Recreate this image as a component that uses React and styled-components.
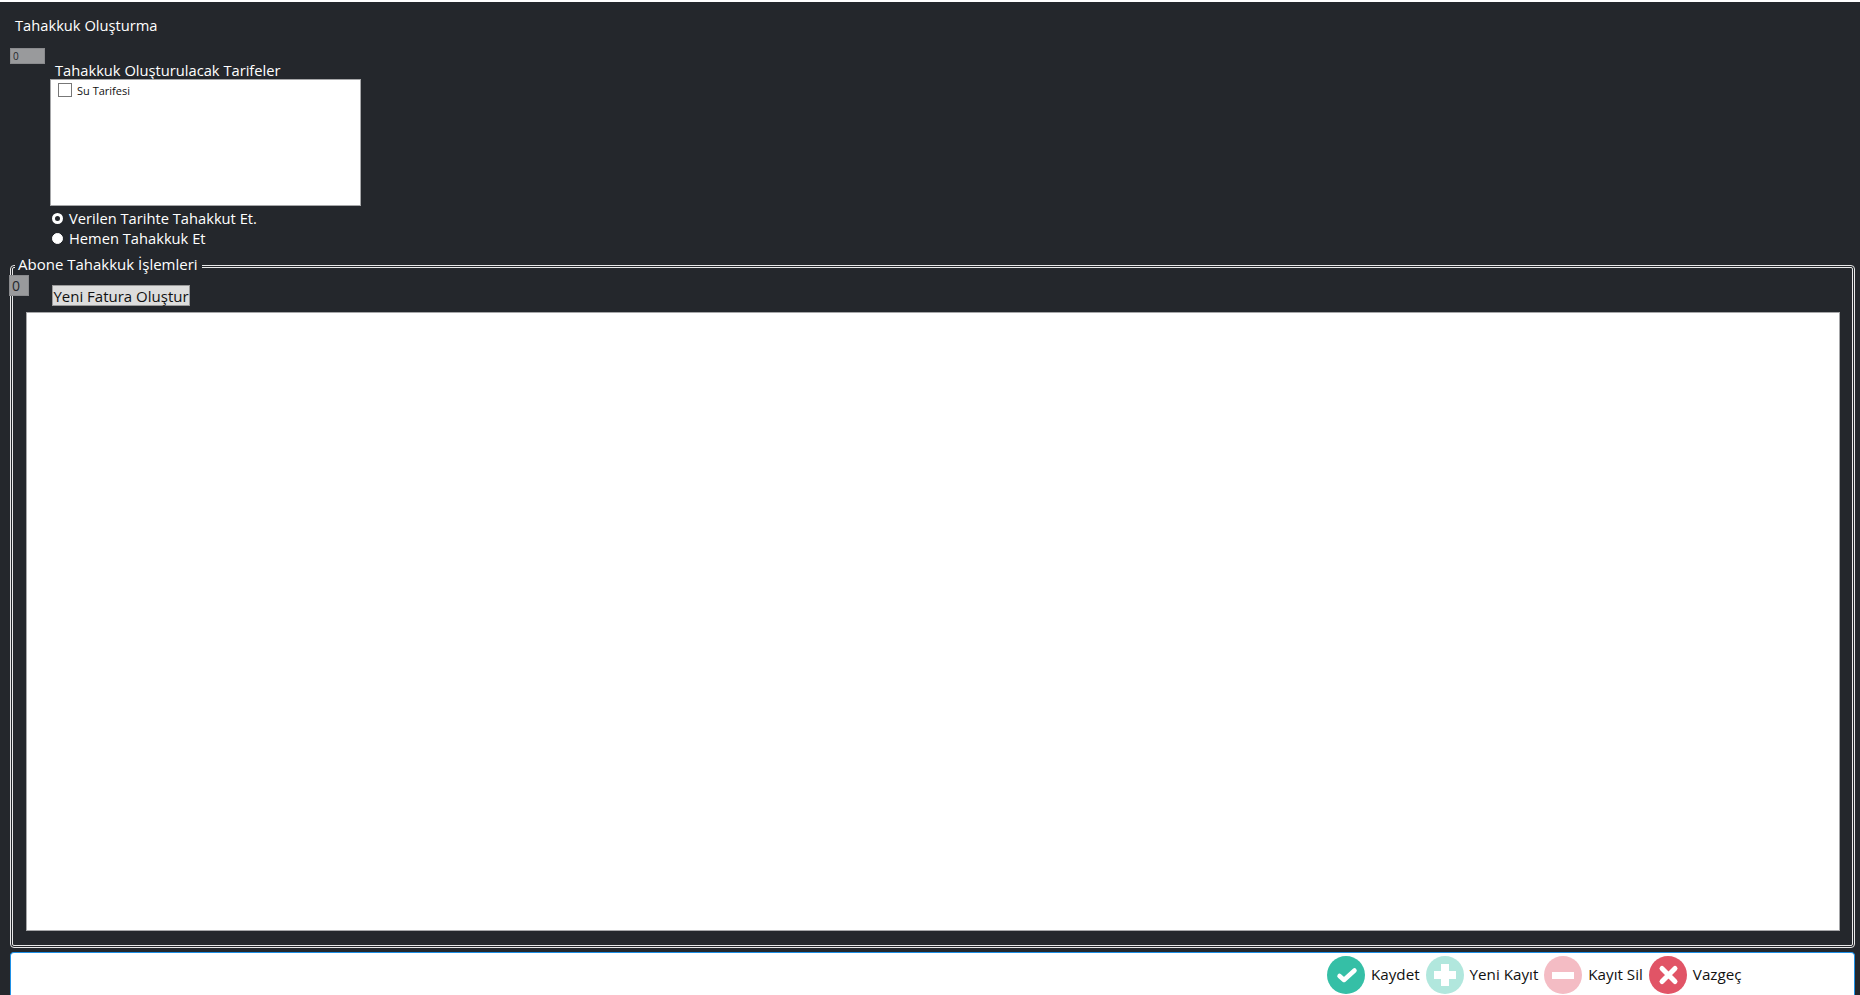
import React from 'react';
import styled, { createGlobalStyle } from 'styled-components';

const GlobalStyle = createGlobalStyle`
  html, body {
    margin: 0;
    padding: 0;
    height: 100%;
    background: #ffffff;
    overflow: hidden;
  }
  #root {
    height: 100%;
  }
`;

const Page = styled.div`
  box-sizing: border-box;
  height: 995px;
  margin-top: 2px;
  background: #24272c;
  color: #fff;
  font-family: "Open Sans", "Noto Sans", sans-serif;
  font-size: 14.7px;
  display: flex;
  flex-direction: column;
  padding: 0 5px 0 10px;
  overflow: hidden;
`;

const Title = styled.div`
  margin: 13px 0 0 5px;
  height: 20px;
  line-height: 20px;
  font-size: 14.7px;
`;

const TopInput = styled.input`
  box-sizing: border-box;
  width: 35px;
  height: 18px;
  margin: 13px 0 0;
  padding: 0 2px;
  background: #999a9c;
  border: 1px solid #8a8b8e;
  color: #24272c;
  font: 10px "Open Sans", sans-serif;
`;

const TariffSection = styled.section`
  margin: -2px 0 0 40px;
  display: flex;
  flex-direction: column;
  align-items: flex-start;
`;

const ListLabel = styled.div`
  margin-left: 5px;
  height: 17px;
  line-height: 17px;
`;

const ListBox = styled.div`
  box-sizing: border-box;
  width: 311px;
  height: 127px;
  background: #fff;
  border: 1px solid #a6a7a9;
  padding: 1px 7px;
  color: #111;
  font-size: 11px;
`;

const CheckRow = styled.label`
  display: flex;
  align-items: center;
  gap: 5px;
  height: 18px;
`;

const CheckBox = styled.span`
  box-sizing: border-box;
  width: 14px;
  height: 14px;
  border: 1px solid #777;
  background: #fff;
`;

const RadioGroup = styled.div`
  margin-top: 2px;
`;

const RadioRow = styled.label`
  display: flex;
  align-items: center;
  gap: 6px;
  height: 20px;
  margin-left: 2px;
`;

const RadioDot = styled.span`
  box-sizing: border-box;
  width: 11px;
  height: 11px;
  border-radius: 50%;
  background: ${(p) => (p.$checked ? '#24272c' : '#fff')};
  border: ${(p) => (p.$checked ? '3px solid #fff' : '1px solid #fff')};
`;

const Group = styled.fieldset`
  box-sizing: border-box;
  flex: none;
  width: 1845px;
  height: 694px;
  margin: 6px 0 0;
  padding: 0 12px 0 13px;
  border: 3px double #e8e8e8;
  border-radius: 4px;
  min-width: 0;
`;

const Legend = styled.legend`
  padding: 0 4px 4px 3px;
  margin-left: -11px;
  line-height: 20px;
  font-size: 15px;
`;

const ActionRow = styled.div`
  display: flex;
  align-items: flex-start;
  height: 34px;
  margin: -3px 0 0 -17px;
`;

const GroupInput = styled.input`
  box-sizing: border-box;
  width: 20px;
  height: 21px;
  margin: 0;
  padding: 0 2px;
  background: #999a9c;
  border: 1px solid #8a8b8e;
  color: #24272c;
  font: 14px "Open Sans", sans-serif;
`;

const NewInvoiceButton = styled.button`
  box-sizing: border-box;
  width: 138px;
  height: 21px;
  margin: 10px 0 0 23px;
  padding: 0;
  background: #dddddd;
  border: 1px solid #9a9a9a;
  color: #111;
  font: 15px "Open Sans", sans-serif;
  line-height: 18px;
`;

const ContentPanel = styled.div`
  box-sizing: border-box;
  height: 619px;
  background: #fff;
  border: 1px solid #a6a7a9;
  margin-top: 3px;
`;

const Footer = styled.footer`
  box-sizing: border-box;
  flex: none;
  width: 1845px;
  height: 60px;
  margin-top: 4px;
  padding: 3px 0 0 1316px;
  background: #fff;
  border: 1px solid #1e90e6;
  border-bottom: 0;
  border-radius: 4px 4px 0 0;
  display: flex;
  align-items: flex-start;
  color: #111;
  font-size: 15.2px;
`;

const FooterAction = styled.button`
  display: flex;
  align-items: center;
  gap: 6px;
  height: 38px;
  margin-right: 6px;
  padding: 0;
  border: 0;
  background: none;
  color: inherit;
  font: inherit;
`;

const ActionLabel = styled.span`
  margin-bottom: 2px;
`;

const IconCircle = styled.svg`
  width: 38px;
  height: 38px;
  display: block;
`;

const ActionIcon = ({ color, children }) => (
  <IconCircle viewBox="0 0 38 38">
    <circle cx="19" cy="19" r="19" fill={color} />
    {children}
  </IconCircle>
);

export default function App() {
  return (
    <>
      <GlobalStyle />
      <Page>
        <Title>Tahakkuk Oluşturma</Title>
        <TopInput readOnly value="0" />
        <TariffSection>
          <ListLabel>Tahakkuk Oluşturulacak Tarifeler</ListLabel>
          <ListBox>
            <CheckRow>
              <CheckBox />
              Su Tarifesi
            </CheckRow>
          </ListBox>
          <RadioGroup>
            <RadioRow>
              <RadioDot $checked />
              Verilen Tarihte Tahakkut Et.
            </RadioRow>
            <RadioRow>
              <RadioDot />
              Hemen Tahakkuk Et
            </RadioRow>
          </RadioGroup>
        </TariffSection>
        <Group>
          <Legend>Abone Tahakkuk İşlemleri</Legend>
          <ActionRow>
            <GroupInput readOnly value="0" />
            <NewInvoiceButton type="button">Yeni Fatura Oluştur</NewInvoiceButton>
          </ActionRow>
          <ContentPanel />
        </Group>
        <Footer>
          <FooterAction type="button">
            <ActionIcon color="#35bfa6">
              <path d="M12.5 20l4.5 4L27.5 14.5" fill="none" stroke="#fff" strokeWidth="4.5" strokeLinecap="round" strokeLinejoin="round" />
            </ActionIcon>
            <ActionLabel>Kaydet</ActionLabel>
          </FooterAction>
          <FooterAction type="button">
            <ActionIcon color="#b1e7dd">
              <path d="M19 8v22M8 19h22" fill="none" stroke="#fff" strokeWidth="8" />
            </ActionIcon>
            <ActionLabel>Yeni Kayıt</ActionLabel>
          </FooterAction>
          <FooterAction type="button">
            <ActionIcon color="#f4bcc4">
              <path d="M8 19.5h22" fill="none" stroke="#fff" strokeWidth="7" />
            </ActionIcon>
            <ActionLabel>Kayıt Sil</ActionLabel>
          </FooterAction>
          <FooterAction type="button">
            <ActionIcon color="#e15466">
              <path d="M13 12.5l13 13M26 12.5l-13 13" fill="none" stroke="#fff" strokeWidth="5" strokeLinecap="round" />
            </ActionIcon>
            <ActionLabel>Vazgeç</ActionLabel>
          </FooterAction>
        </Footer>
      </Page>
    </>
  );
}
